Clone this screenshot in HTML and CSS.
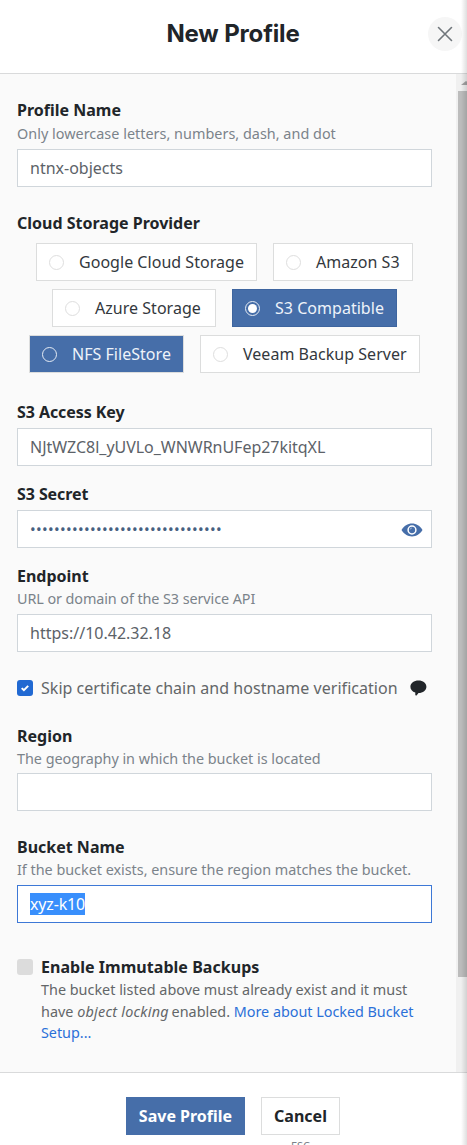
FILE: index.html
```html
<!DOCTYPE html>
<html lang="en">
<head>
<meta charset="utf-8">
<title>New Profile</title>
<link rel="stylesheet" href="styles.css">
</head>
<body>
<div class="dialog">
  <header class="header">
    <h1 class="title">New Profile</h1>
    <button class="close" aria-label="Close">
      <svg width="16" height="16" viewBox="0 0 16 16"><path d="M1.5 1.5l13 13M14.5 1.5l-13 13" fill="none" stroke="#70767b" stroke-width="1.6" stroke-linecap="round"/></svg>
    </button>
  </header>
  <main class="body">
    <form class="form">
      <section class="field name">
        <h2 class="label">Profile Name</h2>
        <p class="hint">Only lowercase letters, numbers, dash, and dot</p>
        <div class="input">ntnx-objects</div>
      </section>
      <section class="field provider">
        <h2 class="label">Cloud Storage Provider</h2>
        <div class="options">
          <div class="option w-gcs"><i class="radio"></i><span>Google Cloud Storage</span></div>
          <div class="option w-s3"><i class="radio"></i><span>Amazon S3</span></div>
          <div class="option w-azure"><i class="radio"></i><span>Azure Storage</span></div>
          <div class="option active w-compat"><i class="radio checked"></i><span>S3 Compatible</span></div>
          <div class="option active hover w-nfs"><i class="radio"></i><span>NFS FileStore</span></div>
          <div class="option w-veeam"><i class="radio"></i><span>Veeam Backup Server</span></div>
        </div>
      </section>
      <section class="field key">
        <h2 class="label">S3 Access Key</h2>
        <div class="input"><span class="key-value">NJtWZC8l_yUVLo_WNWRnUFep27kitqXL</span></div>
      </section>
      <section class="field secret">
        <h2 class="label">S3 Secret</h2>
        <div class="input"><span class="dots">••••••••••••••••••••••••••••••••</span>
          <svg class="eye" width="22" height="14" viewBox="0 0 22 14"><path d="M.5 7C3 3 6.700 .6 11 .6S19 3 21.500 7C19 11 15.300 13.400 11 13.400S3 11 .5 7z" fill="#466ea9"/><circle cx="11" cy="7" r="3.900" fill="#466ea9" stroke="#fff" stroke-width="1.500"/><path d="M9.300 6.300a2 2 0 0 1 1.200-1.200" fill="none" stroke="#fff" stroke-width=".7"/></svg>
        </div>
      </section>
      <section class="field endpoint">
        <h2 class="label">Endpoint</h2>
        <p class="hint">URL or domain of the S3 service API</p>
        <div class="input">https://10.42.32.18</div>
      </section>
      <div class="check-row verify">
        <i class="checkbox on"><svg width="16" height="16" viewBox="0 0 16 16"><path d="M4.700 8.100l2.200 2.100 4.300-4.300" fill="none" stroke="#fff" stroke-width="2"/></svg></i>
        <span class="verify-text">Skip certificate chain and hostname verification</span>
        <svg class="bubble" width="17" height="16" viewBox="0 0 17 16"><path d="M8.500 .5C13 .5 16.400 3.200 16.400 6.700S13 13 8.500 13L6.600 15.600L5.300 15.200V12.500C2.300 11.600 .4 9.400 .4 6.700C.4 3.200 4 .5 8.500 .5z" fill="#212529"/></svg>
      </div>
      <section class="field region">
        <h2 class="label">Region</h2>
        <p class="hint">The geography in which the bucket is located</p>
        <div class="input"></div>
      </section>
      <section class="field bucket">
        <h2 class="label">Bucket Name</h2>
        <p class="hint">If the bucket exists, ensure the region matches the bucket.</p>
        <div class="input focused"><span class="selected">xyz-k10</span></div>
      </section>
      <div class="immutable">
        <i class="checkbox"></i>
        <div>
          <h2 class="label">Enable Immutable Backups</h2>
          <p class="description">The bucket listed above must already exist and it must<br>have <em>object locking</em> enabled. <a class="link">More about Locked Bucket<br>Setup...</a></p>
        </div>
      </div>
    </form>
    <div class="scrollbar"><div class="arrow"></div><div class="thumb"></div></div>
  </main>
  <footer class="footer">
    <button class="button save">Save Profile</button>
    <div class="cancel-group"><button class="button cancel">Cancel</button><span class="esc">ESC</span></div>
  </footer>
  <div class="edge"></div>
</div>
</body>
</html>
```
FILE: styles.css
```css
* { box-sizing: border-box; margin: 0; padding: 0; }
body { background: #fff; font-family: "Noto Sans", sans-serif; font-size: 16px; line-height: 24px; color: #212529; overflow: hidden; }
.dialog { position: relative; width: 467px; height: 1145px; display: flex; flex-direction: column; overflow: hidden; }
.header { flex: none; height: 74px; display: grid; grid-template-columns: 1fr 38px; align-items: center; padding: 0 1px 6px 0; border-bottom: 1px solid #d9dadb; }
.title { font-family: Inter, Roboto, sans-serif; font-weight: 700; font-size: 24px; line-height: 32px; letter-spacing: -.15px; text-align: center; padding: 1px 0 0 38px; white-space: nowrap; }
.close { width: 34px; height: 34px; display: grid; place-items: center; border: 0; border-radius: 50%; background: #f6f6f6; }
.body { flex: none; height: 999px; display: flex; background: #fafafa; border-bottom: 1px solid #d9dadb; overflow: hidden; }
.form { width: 456px; padding: 24px 24px 0 17px; }
.label { height: 24px; font-size: 16px; line-height: 24px; font-weight: 700; white-space: nowrap; }
.hint { height: 22px; font-size: 14.4px; line-height: 22px; margin-bottom: 4px; color: #7b838a; white-space: nowrap; }
.name .hint { padding-top: 1px; margin-bottom: 5px; letter-spacing: .02px; }
.input { height: 38px; display: flex; align-items: center; padding: 0 12px; background: #fff; border: 1px solid #d0d6db; color: #5c6268; white-space: nowrap; }
.key-value { letter-spacing: -.03px; }
.focused { border-color: #3d78d6; }
.selected { height: 22px; line-height: 22px; letter-spacing: -.15px; background: #398ffc; color: #fff; }
.provider { padding-top: 24px; }
.options { display: flex; flex-wrap: wrap; justify-content: center; gap: 8px 16px; margin-top: 8px; }
.option { height: 38px; display: flex; align-items: center; gap: 15px; padding-left: 12px; background: #fff; border: 1px solid #dcdddd; color: #33383d; letter-spacing: .03px; white-space: nowrap; }
.w-gcs { width: 221px; }
.w-s3 { width: 140px; }
.w-azure { width: 164px; }
.w-compat { width: 165px; }
.w-nfs { width: 155px; }
.w-veeam { width: 220px; }
.active { background: #466ea9; border-color: #3e659f; color: #eef3fa; }
.hover { border-color: #dcdddd; }
.radio { width: 15px; height: 15px; flex: none; border: 1px solid #dedede; border-radius: 50%; }
.active .radio { border-color: #e5ebf4; }
.checked { display: grid; place-items: center; }
.checked::after { content: ""; width: 9px; height: 9px; border-radius: 50%; background: #fff; }
.key { padding-top: 27px; }
.secret, .endpoint { padding-top: 16px; }
.key .label, .secret .label { margin-bottom: 4px; letter-spacing: -.08px; }
.endpoint .hint { letter-spacing: -.09px; }
.dots { font-size: 15px; letter-spacing: .36px; color: #466080; }
.eye { margin: 2px -4px 0 auto; }
.check-row { display: flex; align-items: center; height: 24px; margin-top: 24px; color: #636668; white-space: nowrap; }
.verify-text { letter-spacing: .03px; }
.checkbox { width: 16px; height: 16px; flex: none; display: grid; margin-right: 8px; border-radius: 3px; background: #dcdcdc; }
.on { background: #2169d2; }
.bubble { margin-left: 12px; }
.region { padding-top: 24px; }
.region .hint { margin-bottom: 3px; letter-spacing: -.03px; }
.bucket { padding-top: 24px; }
.bucket .hint { letter-spacing: -.02px; }
.immutable { display: flex; margin-top: 32px; }
.immutable .checkbox { margin-top: 4px; }
.immutable .label { letter-spacing: .04px; }
.description { font-size: 14.4px; line-height: 21.6px; color: #636668; white-space: nowrap; }
.description em { letter-spacing: .25px; margin-right: -1px; }
.link { color: #2b70d8; letter-spacing: -.03px; }
.scrollbar { width: 11px; padding-left: 2px; background: #f0f0f0; }
.arrow { width: 0; height: 0; margin: 7px 0 6px 3px; border: solid transparent; border-width: 0 5px 4px; border-bottom-color: #a3a3a3; }
.thumb { height: 886px; background: #bcbcbc; }
.footer { flex: none; display: flex; gap: 16px; padding: 24px 0 0 126px; height: 72px; }
.button { flex: none; height: 38px; border: 1px solid #dcdddd; font: 700 16px/24px "Noto Sans", sans-serif; color: #212529; background: #fff; white-space: nowrap; }
.save { width: 119px; background: #466ea9; border-color: #466ea9; color: #fff; }
.cancel { width: 79px; }
.cancel-group { display: flex; flex-direction: column; align-items: center; }
.esc { margin-top: 3px; font-size: 11px; line-height: 16px; color: #7b838a; }
.edge { position: absolute; inset: 0 0 0 auto; width: 6px; background: linear-gradient(to right, rgba(0,0,0,0), rgba(0,0,0,.13)); }
```
